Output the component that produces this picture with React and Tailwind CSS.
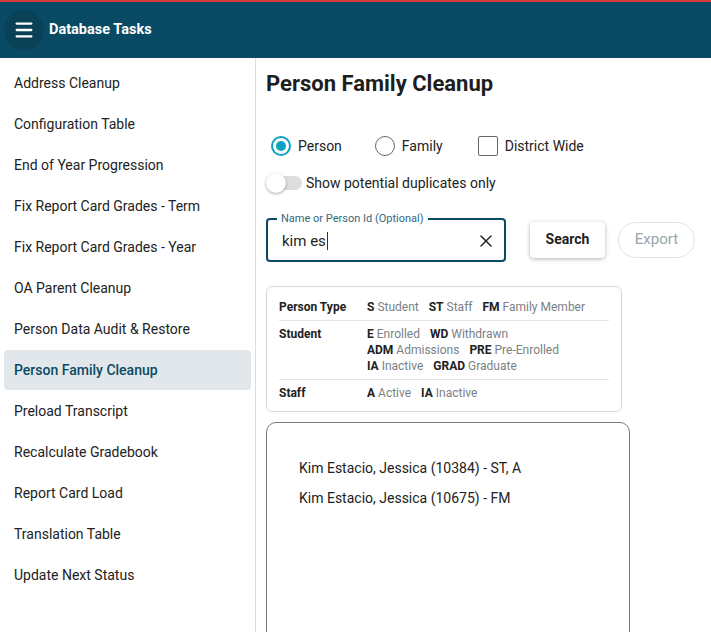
import { Menu, X } from 'lucide-react'

const tasks = [
  'Address Cleanup',
  'Configuration Table',
  'End of Year Progression',
  'Fix Report Card Grades - Term',
  'Fix Report Card Grades - Year',
  'OA Parent Cleanup',
  'Person Data Audit & Restore',
  'Person Family Cleanup',
  'Preload Transcript',
  'Recalculate Gradebook',
  'Report Card Load',
  'Translation Table',
  'Update Next Status',
]

const legend = [
  { label: 'Person Type', lines: [[['S', 'Student'], ['ST', 'Staff'], ['FM', 'Family Member']]] },
  {
    label: 'Student',
    lines: [
      [['E', 'Enrolled'], ['WD', 'Withdrawn']],
      [['ADM', 'Admissions'], ['PRE', 'Pre-Enrolled']],
      [['IA', 'Inactive'], ['GRAD', 'Graduate']],
    ],
  },
  { label: 'Staff', lines: [[['A', 'Active'], ['IA', 'Inactive']]] },
]

const results = [
  'Kim Estacio, Jessica (10384) - ST, A',
  'Kim Estacio, Jessica (10675) - FM',
]

function Radio({ checked, label }) {
  return (
    <label className="flex items-center gap-[7px]">
      <span
        className={
          checked
            ? 'w-5 h-5 rounded-full border-2 border-[#0aa3c2] flex items-center justify-center'
            : 'w-5 h-5 rounded-full border-[1.5px] border-[#666]'
        }
      >
        {checked && <span className="w-[10px] h-[10px] rounded-full bg-[#0aa3c2]" />}
      </span>
      <span>{label}</span>
    </label>
  )
}

export default function App() {
  return (
    <div className="h-screen overflow-hidden flex flex-col bg-white text-[#222] font-['Roboto',sans-serif]">
      <div className="h-[2px] bg-[#d63a3a]" />
      <header className="h-[56px] bg-[#084a63] flex items-center px-1 gap-[5px]">
        <button className="w-10 h-10 rounded-full bg-[#0a4157] flex items-center justify-center text-white">
          <Menu size={22} strokeWidth={2.5} />
        </button>
        <h1 className="text-white font-bold text-[14.5px]">Database Tasks</h1>
      </header>

      <div className="flex flex-1 min-h-0">
        <nav className="w-[256px] shrink-0 border-r border-[#dcdcdc] pt-[5px] text-[14px]">
          {tasks.map((t) => (
            <div
              key={t}
              className={
                t === 'Person Family Cleanup'
                  ? 'mx-1 h-[40px] mb-px px-[10px] flex items-center rounded-[4px] bg-[#e1e7ea] text-[#0b4a63] font-medium'
                  : 'mx-1 h-[41px] px-[10px] flex items-center'
              }
            >
              {t}
            </div>
          ))}
        </nav>

        <main className="flex-1 pl-[10px] pt-[12px]">
          <h2 className="text-[22px] leading-[28px] font-bold text-[#1e1e1e]">Person Family Cleanup</h2>

          <div className="mt-[36px] h-6 flex items-center text-[14px] pl-[5px]">
            <Radio checked label="Person" />
            <div className="ml-[33px]">
              <Radio label="Family" />
            </div>
            <label className="ml-[35px] flex items-center gap-[7px]">
              <span className="w-5 h-5 rounded-[2px] border-[1.5px] border-[#666]" />
              <span>District Wide</span>
            </label>
          </div>

          <div className="mt-[15px] h-5 flex items-center text-[14px]">
            <div className="relative w-[36px] h-5 flex items-center">
              <span className="ml-[2px] w-[34px] h-[14px] rounded-full bg-[#dedede]" />
              <span className="absolute left-0 top-0 w-5 h-5 rounded-full bg-white shadow-[0_1px_3px_rgba(0,0,0,0.35)]" />
            </div>
            <span className="ml-[4px]">Show potential duplicates only</span>
          </div>

          <div className="mt-[20px] flex items-center">
            <fieldset className="w-[240px] h-[49px] border-2 border-[#0b4a63] rounded-[4px] px-[14px] flex items-center">
              <legend className="ml-[-5px] px-[4px] text-[11px] leading-3 text-[#35687d]">Name or Person Id (Optional)</legend>
              <span className="text-[15px] -mt-[3px] flex items-center">
                kim es<span className="w-px h-[18px] bg-[#333] ml-px" />
              </span>
              <X size={20} strokeWidth={1.8} className="ml-auto -mt-[4px] -mr-[6px] text-[#222]" />
            </fieldset>
            <button className="ml-[24px] mt-[4px] w-[75px] h-[36px] rounded-[4px] bg-white shadow-[0_1px_4px_rgba(0,0,0,0.3)] text-[14px] font-bold">
              Search
            </button>
            <button className="ml-[13px] mt-[4px] w-[77px] h-[36px] rounded-full border border-[#e2e2e2] text-[15px] text-[#9aa3ab]">
              Export
            </button>
          </div>

          <div className="mt-[24px] w-[356px] border border-[#d9d9d9] rounded-[6px] px-[12px] pt-[7px] pb-[5px] text-[12px] leading-4">
            {legend.map((row, i) => (
              <div key={row.label} className={i > 0 ? 'flex py-[5px] border-t border-[#e4e4e4]' : 'flex py-[5px]'}>
                <div className="w-[88px] font-bold text-[#222]">{row.label}</div>
                <div>
                  {row.lines.map((line, j) => (
                    <div key={j} className="flex gap-[10px]">
                      {line.map(([code, text]) => (
                        <span key={code + text}>
                          <b className="text-[#222]">{code}</b> <span className="text-[#7a7f85]">{text}</span>
                        </span>
                      ))}
                    </div>
                  ))}
                </div>
              </div>
            ))}
          </div>

          <div className="mt-[10px] w-[364px] h-[260px] border border-[#7c7c7c] rounded-[10px] pl-[32px] pt-[30px] text-[14px]">
            {results.map((r) => (
              <div key={r} className="h-[30px] flex items-center">{r}</div>
            ))}
          </div>
        </main>
      </div>
    </div>
  )
}
